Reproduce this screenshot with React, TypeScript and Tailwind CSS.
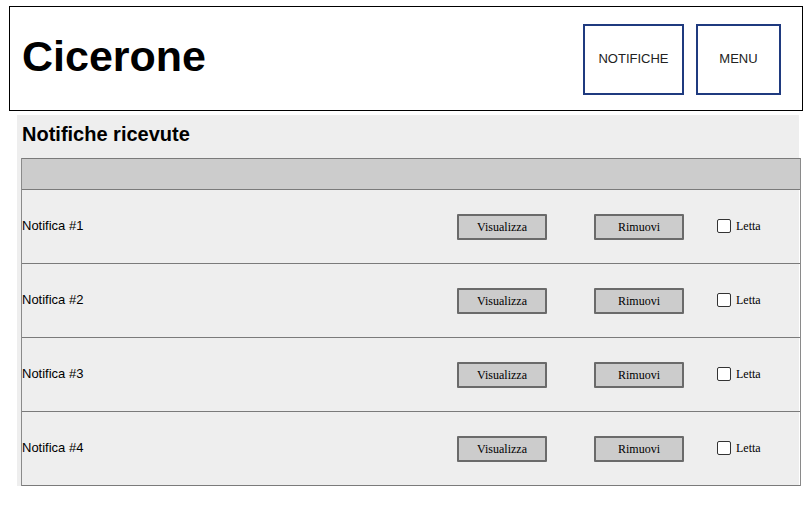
import React from "react";

const notifiche = ["Notifica #1", "Notifica #2", "Notifica #3", "Notifica #4"];

export default function App() {
  return (
    <div className="w-[811px] h-[508px] bg-white font-['Liberation_Sans',Arial,sans-serif] text-black overflow-hidden">
      {/* Top bar */}
      <header className="ml-[9px] mt-[6px] w-[794px] h-[105px] border border-black flex items-center justify-between pl-[12px] pr-[21px]">
        <h1 className="text-[43px] font-bold leading-none -mt-[5px]">Cicerone</h1>
        <div className="flex gap-[12px] mt-[1px]">
          <button className="w-[101px] h-[71px] border-2 border-[#1f3a7f] text-[13px] text-[#222]">NOTIFICHE</button>
          <button className="w-[85px] h-[71px] border-2 border-[#1f3a7f] text-[13px] text-[#222]">MENU</button>
        </div>
      </header>

      <main className="ml-[17px] mt-[4px] w-[782px] bg-[#eeeeee] pt-[7px]">
        <h2 className="ml-[5px] text-[20px] font-bold leading-[24px]">Notifiche ricevute</h2>

        <div className="ml-[4px] mt-[12px] w-[780px] border-l border-r border-[#8a8a8a]">
          <div className="h-[32px] bg-[#cccccc] border-t border-b border-[#7a7a7a]"></div>
          {notifiche.map((n) => (
            <NotificaRow key={n} title={n} />
          ))}
        </div>
      </main>
    </div>
  );
}

function NotificaRow({ title }: { title: string }) {
  return (
    <div className="h-[74px] border-b border-[#7a7a7a] flex items-center">
      <span className="w-[435px] text-[13px] leading-none -mt-[3px]">{title}</span>
      <button className="w-[90px] h-[26px] bg-[#cccccc] border-2 border-[#6a6a6a] rounded-[1px] font-['Liberation_Serif',serif] text-[12px]">
        Visualizza
      </button>
      <button className="ml-[47px] w-[90px] h-[26px] bg-[#cccccc] border-2 border-[#6a6a6a] rounded-[1px] font-['Liberation_Serif',serif] text-[12px]">
        Rimuovi
      </button>
      <div className="ml-[33px] flex items-center gap-[5px] -mt-[1px]">
        <span className="w-[14px] h-[14px] bg-white border border-[#333] rounded-[2px]"></span>
        <span className="font-['Liberation_Serif',serif] text-[12px] leading-none">Letta</span>
      </div>
    </div>
  );
}
